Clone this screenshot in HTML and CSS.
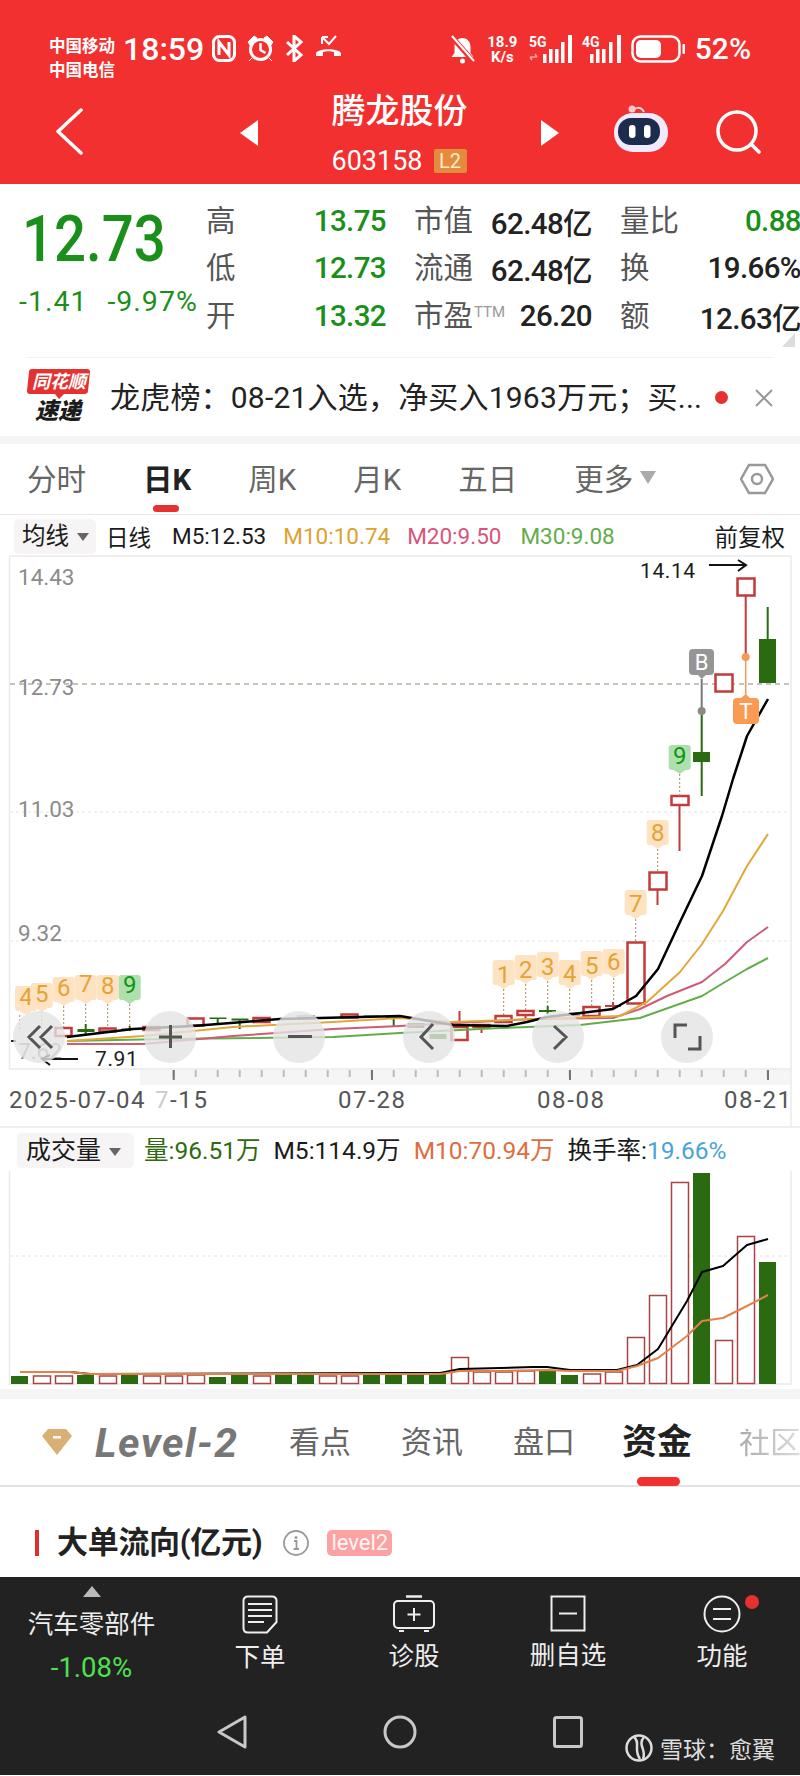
FILE: index.html
```html
<!DOCTYPE html>
<html lang="zh-CN">
<head>
    <meta charset="UTF-8">
    <meta name="viewport" content="width=device-width, initial-scale=1.0">
    <title>腾龙股份 603158</title>
    <link rel="stylesheet" href="styles.css">
</head>
<body>
<div class="phone">
    <header class="topbar">
        <div class="statusbar">
            <div class="carriers"><span>中国移动</span><span>中国电信</span></div>
            <span class="clock">18:59</span>
            <svg class="st-icon" width="24" height="27" viewBox="0 0 24 27"><rect x="1.5" y="1.5" width="21" height="24" rx="6" fill="none" stroke="#fff" stroke-width="3"/><path d="M7 20V7l10 13V7" fill="none" stroke="#fff" stroke-width="3"/></svg>
            <svg class="st-icon" width="27" height="27" viewBox="0 0 27 27"><circle cx="13.5" cy="14.5" r="10" fill="none" stroke="#fff" stroke-width="3"/><path d="M13.5 8v7l5 3" fill="none" stroke="#fff" stroke-width="2.5"/><path d="M1 7l6-6 3 2-7 7zM26 7l-6-6-3 2 7 7zM5 23l-3 3M22 23l3 3" fill="#fff" stroke="#fff"/></svg>
            <svg class="st-icon" width="19" height="27" viewBox="0 0 19 27"><path d="M2 7l14 13-7 6V1l7 6L2 20" fill="none" stroke="#fff" stroke-width="3"/></svg>
            <svg class="st-icon" width="27" height="23" viewBox="0 0 27 23"><path d="M1 21v-3c3-5 22-5 25 0v3h-7v-4c-3-1-8-1-11 0v4z" fill="#fff"/><path d="M7 9V2M7 2h6M7 2l7 7 7-8" fill="none" stroke="#fff" stroke-width="2"/></svg>
            <div class="status-right">
                <svg class="st-icon" width="27" height="29" viewBox="0 0 27 29"><path d="M13.500 3c-5 0-8 4-8 9v6l-3 4h22l-3-4v-6c0-5-3-9-8-9z" fill="#fff"/><circle cx="13.500" cy="26" r="2.500" fill="#fff"/><path d="M3 2l21 24" stroke="#f23030" stroke-width="5"/><path d="M3 1l22 25" stroke="#fff" stroke-width="2"/></svg>
                <div class="speed"><span>18.9</span><span>K/s</span></div>
                <svg class="st-icon signal" width="44" height="28" viewBox="0 0 44 28"><text x="0" y="12" class="sig-label">5G</text><path d="M1 22h7M8 22l-2-3M1 22l2 3" stroke="#f7a5a5" stroke-width="1.500" fill="none"/><rect x="14" y="19" width="3.500" height="9" fill="#fff"/><rect x="20" y="14" width="3.500" height="14" fill="#fff"/><rect x="26" y="14" width="3.500" height="14" fill="#fff"/><rect x="32" y="7" width="3.500" height="21" fill="#fff"/><rect x="39" y="0" width="4" height="28" fill="#fff"/></svg>
                <svg class="st-icon signal" width="40" height="28" viewBox="0 0 40 28"><text x="0" y="12" class="sig-label">4G</text><rect x="8" y="19" width="3.500" height="9" fill="#fff"/><rect x="14" y="14" width="3.500" height="14" fill="#fff"/><rect x="20" y="14" width="3.500" height="14" fill="#fff"/><rect x="27" y="7" width="3.500" height="21" fill="#fff"/><rect x="35" y="0" width="4" height="28" fill="#fff"/></svg>
                <svg class="st-icon" width="55" height="28" viewBox="0 0 55 28"><rect x="1.500" y="1.500" width="47" height="25" rx="8" fill="none" stroke="#fff" stroke-width="2.500"/><rect x="5" y="5" width="25" height="18" rx="5" fill="#fff"/><rect x="51.500" y="9" width="2.500" height="10" rx="1" fill="#fff"/></svg>
                <span class="battery">52%</span>
            </div>
        </div>
        <div class="navbar">
            <svg class="back" width="28" height="47" viewBox="0 0 28 47"><path d="M26 2L3 23.500 26 45" fill="none" stroke="#fff" stroke-width="3.500" stroke-linecap="round" stroke-linejoin="round"/></svg>
            <div class="nav-center">
                <svg width="18" height="26" viewBox="0 0 18 26"><path d="M18 0v26L0 13z" fill="#fff"/></svg>
                <div class="stock-name">
                    <div class="name">腾龙股份</div>
                    <div class="code">603158<span class="l2">L2</span></div>
                </div>
                <svg width="18" height="26" viewBox="0 0 18 26"><path d="M0 0v26l18-13z" fill="#fff"/></svg>
            </div>
            <svg class="robot" width="56" height="50" viewBox="0 0 56 50"><path d="M20 9c1-5 8-6 11 0" fill="none" stroke="#f7d9e0" stroke-width="2"/><circle cx="19" cy="6" r="3.500" fill="#f9c8c8"/><rect x="1" y="10" width="54" height="39" rx="19" fill="#efeafc"/><rect x="5" y="15" width="42" height="27" rx="13" fill="#1d2b4f"/><rect x="16" y="22" width="6.500" height="13" rx="3" fill="#fff"/><rect x="31" y="22" width="6.500" height="13" rx="3" fill="#fff"/></svg>
            <svg class="search" width="46" height="44" viewBox="0 0 46 44"><circle cx="22" cy="21" r="19" fill="none" stroke="#fff" stroke-width="3.500"/><path d="M36 34l8 8" stroke="#fff" stroke-width="3.500" stroke-linecap="round"/></svg>
        </div>
    </header>

    <section class="quote">
        <div class="price-box">
            <div class="price">12.73</div>
            <div class="change"><span>-1.41</span><span>-9.97%</span></div>
        </div>
        <div class="stats">
            <div class="stat"><span class="lbl">高</span><span class="val green">13.75</span></div>
            <div class="stat"><span class="lbl">市值</span><span class="val">62.48亿</span></div>
            <div class="stat"><span class="lbl">量比</span><span class="val green">0.88</span></div>
            <div class="stat"><span class="lbl">低</span><span class="val green">12.73</span></div>
            <div class="stat"><span class="lbl">流通</span><span class="val">62.48亿</span></div>
            <div class="stat"><span class="lbl">换</span><span class="val">19.66%</span></div>
            <div class="stat"><span class="lbl">开</span><span class="val green">13.32</span></div>
            <div class="stat"><span class="lbl">市盈<sup class="ttm">TTM</sup></span><span class="val">26.20</span></div>
            <div class="stat"><span class="lbl">额</span><span class="val">12.63亿</span></div>
        </div>
        <div class="corner"></div>
    </section>

    <section class="news">
        <svg class="news-logo" width="64" height="54" viewBox="0 0 64 54">
            <path d="M5 0H60Q63 0 63 3L61 22Q61 25 57 25H37L32 30 28 25H3Q0 25 0 22L2 3Q2 0 5 0Z" fill="#e5312f"/>
            <text x="32" y="19" class="logo-top">同花顺</text>
            <text x="31" y="50" class="logo-bottom">速递</text>
        </svg>
        <div class="news-text">龙虎榜：08-21入选，净买入1963万元；买...</div>
        <span class="news-dot"></span>
        <svg class="news-close" width="18" height="18" viewBox="0 0 18 18"><path d="M1 1l16 16M17 1L1 17" stroke="#999" stroke-width="2"/></svg>
    </section>
    <div class="band"></div>

    <nav class="periods">
        <span class="period">分时</span>
        <span class="period active">日K</span>
        <span class="period">周K</span>
        <span class="period">月K</span>
        <span class="period">五日</span>
        <span class="period more">更多<i class="caret"></i></span>
        <svg class="hex" width="34" height="32" viewBox="0 0 34 32"><path d="M9 2h16l8 14-8 14H9L1 16z" fill="none" stroke="#999" stroke-width="2.500"/><circle cx="17" cy="16" r="5" fill="none" stroke="#999" stroke-width="2.500"/></svg>
    </nav>

    <div class="legend">
        <span class="picker">均线<i class="caret small"></i></span>
        <span>日线</span>
        <span class="m5">M5:12.53</span>
        <span class="m10">M10:10.74</span>
        <span class="m20">M20:9.50</span>
        <span class="m30">M30:9.08</span>
        <span class="adjust">前复权</span>
    </div>

    <svg class="chart" width="800" height="575" viewBox="0 555 800 575">
        <defs>
            <path id="tag" d="M0 0L-6-4H-8Q-11-4-11-7V-26Q-11-29-8-29H8Q11-29 11-26V-7Q11-4 8-4H6Z"/>
        </defs>
        <rect x="140" y="1070" width="650" height="16" fill="#f5f5f5"/>
        <path class="frame" d="M9.500 557H791M9.500 557V1070H791M791 557V1128"/>
        <line class="grid" x1="10" y1="813" x2="790" y2="813"/>
        <line class="grid" x1="10" y1="942" x2="790" y2="942"/>
        <line class="price-line" x1="10" y1="685" x2="790" y2="685"/>

        <text x="18" y="586" class="axis">14.43</text>
        <text x="18" y="696" class="axis">12.73</text>
        <text x="18" y="818" class="axis">11.03</text>
        <text x="18" y="942" class="axis">9.32</text>
        <text x="18" y="1060" class="axis">7.62</text>

        <!-- hollow red candles -->
        <g class="up">
            <rect x="55.500" y="1029" width="16" height="8"/>
            <rect x="99.500" y="1029.500" width="16" height="3"/>
            <rect x="143.500" y="1028" width="16" height="3"/>
            <rect x="187.500" y="1019.500" width="16" height="7"/>
            <rect x="253.500" y="1019" width="16" height="4"/>
            <rect x="341.500" y="1015.500" width="16" height="3"/>
            <rect x="451.500" y="1028" width="16" height="13"/>
            <rect x="473.500" y="1026" width="16" height="2"/>
            <rect x="495.500" y="1017" width="16" height="6"/>
            <rect x="517.500" y="1012" width="16" height="4"/>
            <rect x="583.500" y="1008" width="16" height="9"/>
            <rect x="627.500" y="943.500" width="17" height="61"/>
            <rect x="649.500" y="873.500" width="17" height="17"/>
            <rect x="671.500" y="797" width="17" height="9"/>
            <rect x="715.500" y="675.500" width="17" height="17"/>
            <rect x="737.500" y="579.500" width="17" height="17"/>
        </g>
        <g class="up-wick">
            <path d="M459.500 1012V1028M481.500 1028V1034M525.500 1016V1019M613 1003V1010M605 1007H621M657.500 891V906M679.500 806V852M745.700 597V658"/>
        </g>
        <!-- solid green candles -->
        <g class="down">
            <rect x="77.500" y="1030" width="17" height="3"/>
            <rect x="121.500" y="1029.500" width="17" height="1.500"/>
            <rect x="209.500" y="1018.500" width="17" height="1.500"/>
            <rect x="231.500" y="1019.500" width="17" height="2"/>
            <rect x="363.500" y="1016.500" width="16" height="1.500"/>
            <rect x="385.500" y="1018" width="16" height="1.500"/>
            <rect x="407.500" y="1024" width="17" height="5"/>
            <rect x="429.500" y="1035" width="17" height="5"/>
            <rect x="539" y="1011" width="17" height="2"/>
            <rect x="693" y="753" width="17" height="10"/>
            <rect x="759" y="640" width="17" height="44"/>
        </g>
        <path class="down-wick" d="M85.700 1025V1035M129.700 1027V1032M217.700 1019V1024M239.700 1020V1030M393.700 1016V1028M547.700 1007V1015M701.700 712V797M767.700 608V640"/>
        <path class="grey-wick" d="M701.700 680V712"/>
        <rect x="297" y="1016" width="18" height="5" fill="#a9a9a9"/>
        <rect x="569" y="1013" width="11" height="4" fill="#b9b9b9"/>

        <!-- moving averages -->
        <polyline class="ma ma30" points="67,1042 167,1040 333,1038 400,1034 500,1029 580,1026 640,1019 702,997 725,983 747,970 768,959"/>
        <polyline class="ma ma20" points="67,1045 143,1045 233,1037 333,1030 400,1027 533,1020 613,1019 640,1010 667,997 702,983 725,965 747,943 768,928"/>
        <polyline class="ma ma10" points="67,1042 143,1037 233,1028 333,1023 400,1019 450,1023 620,1017 647,1003 680,973 702,945 723,912 747,867 768,835"/>
        <polyline class="ma ma5" points="67,1038 133,1030 193,1027 280,1020 400,1017 453,1026 507,1027 527,1023 547,1018 573,1015 613,1010 636,997 658,970 680,923 702,877 722,817 733,780 747,737 768,700"/>
        <line x1="11" y1="1042" x2="16" y2="1042" stroke="#222" stroke-width="2"/>

        <!-- count markers -->
        <path class="dots" d="M19.700 1016V1030M41.700 1012V1030M63.700 1007V1028M85.700 1005V1025M107.700 1005V1029M129.700 1005V1027M503.700 990V1017M525.700 985V1011M547.700 982V1007M569.700 990V1013M591.700 981V1007M613.700 979V1003M635.700 920V943M657.700 850V873M679.700 775V797"/>
        <g class="tag-o">
            <use href="#tag" x="26" y="1016"/><text x="26" y="1006">4</text>
            <use href="#tag" x="41.700" y="1013"/><text x="41.700" y="1003">5</text>
            <use href="#tag" x="63.700" y="1007"/><text x="63.700" y="997">6</text>
            <use href="#tag" x="85.700" y="1005"/><text x="85.700" y="993">7</text>
            <use href="#tag" x="107.700" y="1005"/><text x="107.700" y="995">8</text>
            <use href="#tag" x="503.700" y="990"/><text x="503.700" y="984">1</text>
            <use href="#tag" x="525.700" y="985"/><text x="525.700" y="979">2</text>
            <use href="#tag" x="547.700" y="982"/><text x="547.700" y="976">3</text>
            <use href="#tag" x="569.700" y="990"/><text x="569.700" y="983">4</text>
            <use href="#tag" x="591.700" y="981"/><text x="591.700" y="975">5</text>
            <use href="#tag" x="613.700" y="979"/><text x="613.700" y="971">6</text>
            <use href="#tag" x="635.700" y="920"/><text x="635.700" y="913">7</text>
            <use href="#tag" x="657.700" y="850"/><text x="657.700" y="842">8</text>
        </g>
        <g class="tag-g">
            <use href="#tag" x="129.700" y="1005"/><text x="129.700" y="994">9</text>
            <use href="#tag" x="679.700" y="775"/><text x="679.700" y="765">9</text>
        </g>

        <!-- buy and sell marks -->
        <circle cx="701.700" cy="712" r="4" fill="#8a8a80"/>
        <path d="M693 650H710Q714 650 714 654V672Q714 676 710 676H706L701.700 680 698 676H693Q689 676 689 672V654Q689 650 693 650Z" fill="#959595"/>
        <text x="701.700" y="671" class="mark">B</text>
        <line x1="745.700" y1="658" x2="745.700" y2="696" stroke="#f59a50" stroke-width="1.500"/>
        <circle cx="745.700" cy="658" r="4" fill="#f59a50"/>
        <path d="M737 699H741L745.700 695 750 699H755Q759 699 759 703V721Q759 725 755 725H737Q733 725 733 721V703Q733 699 737 699Z" fill="#fb9a52"/>
        <text x="745.700" y="720" class="mark">T</text>

        <text x="640" y="579" class="extreme">14.14</text>
        <path class="arrow" d="M709 566H745M738 561L746 566 738 572"/>
        <text x="95" y="1067" class="extreme">7.91</text>
        <path class="arrow" d="M78 1060H42M50 1056L42 1060 50 1066"/>

        <!-- zoom and pan buttons over the chart -->
        <circle class="ctrl" cx="39" cy="1038" r="26"/>
        <circle class="ctrl" cx="170" cy="1038" r="26"/>
        <circle class="ctrl" cx="299" cy="1038" r="26"/>
        <circle class="ctrl" cx="429" cy="1038" r="26"/>
        <circle class="ctrl" cx="558" cy="1038" r="26"/>
        <circle class="ctrl" cx="687" cy="1038" r="26"/>
        <path class="ctrl-icon" d="M40 1027L29 1038 40 1049M52 1027L41 1038 52 1049M159 1038H182M170.500 1026V1049M288 1037.500H312M433 1025L421 1038 433 1050M554 1027L566 1038 554 1050M675 1039V1026H687M700 1037V1050H688"/>

        <!-- time axis -->
        <line class="ticks" x1="172.700" y1="1074.500" x2="770" y2="1074.500"/>
        <path class="major" d="M173.700 1071V1081M372 1071V1081M570 1071V1081M768 1071V1081"/>
        <text x="9" y="1109" class="date">2025-07-04</text>
        <text x="155" y="1109" class="date"><tspan class="faded">7</tspan>-15</text>
        <text x="338" y="1109" class="date">07-28</text>
        <text x="537" y="1109" class="date">08-08</text>
        <text x="724" y="1109" class="date">08-21</text>
        <line x1="0" y1="1128" x2="800" y2="1128" stroke="#eee" stroke-width="2"/>
    </svg>

    <div class="vol-legend">
        <span class="picker">成交量<i class="caret small"></i></span>
        <span class="vol-now">量:96.51万</span>
        <span>M5:114.9万</span>
        <span class="vol-m10">M10:70.94万</span>
        <span>换手率:<b class="turnover">19.66%</b></span>
    </div>

    <svg class="volume" width="800" height="218" viewBox="0 1172 800 218">
        <path class="frame" d="M9.500 1172V1385H791V1172"/>
        <line class="grid" x1="10" y1="1257" x2="790" y2="1257"/>
        <g class="down">
            <rect x="11" y="1377" width="17" height="8"/>
            <rect x="77" y="1376" width="17" height="9"/>
            <rect x="121" y="1376" width="17" height="9"/>
            <rect x="209" y="1378" width="17" height="7"/>
            <rect x="231" y="1376" width="17" height="9"/>
            <rect x="275" y="1376" width="17" height="9"/>
            <rect x="297" y="1376" width="17" height="9"/>
            <rect x="363" y="1376" width="17" height="9"/>
            <rect x="385" y="1376" width="17" height="9"/>
            <rect x="407" y="1376" width="17" height="9"/>
            <rect x="429" y="1375" width="17" height="10"/>
            <rect x="539" y="1372" width="17" height="13"/>
            <rect x="561" y="1376" width="17" height="9"/>
            <rect x="693" y="1174" width="17" height="211"/>
            <rect x="759" y="1263" width="17" height="122"/>
        </g>
        <g class="vol-up">
            <rect x="33.500" y="1377" width="17" height="7.500"/>
            <rect x="55.500" y="1377" width="17" height="7.500"/>
            <rect x="99.500" y="1377" width="17" height="7.500"/>
            <rect x="143.500" y="1377" width="17" height="7.500"/>
            <rect x="165.500" y="1377" width="17" height="7.500"/>
            <rect x="187.500" y="1376" width="17" height="8.500"/>
            <rect x="253.500" y="1377" width="17" height="7.500"/>
            <rect x="319.500" y="1377" width="17" height="7.500"/>
            <rect x="341.500" y="1377" width="17" height="7.500"/>
            <rect x="451.500" y="1358.500" width="17" height="26"/>
            <rect x="473.500" y="1373" width="17" height="11.500"/>
            <rect x="495.500" y="1373" width="17" height="11.500"/>
            <rect x="517.500" y="1372" width="17" height="12.500"/>
            <rect x="583.500" y="1375" width="17" height="9.500"/>
            <rect x="605.500" y="1373" width="17" height="11.500"/>
            <rect x="627.500" y="1338.500" width="17" height="46"/>
            <rect x="649.500" y="1296.500" width="17" height="88"/>
            <rect x="671.500" y="1183.500" width="17" height="201"/>
            <rect x="715.500" y="1341.500" width="17" height="43"/>
            <rect x="737.500" y="1237.500" width="17" height="147"/>
        </g>
        <polyline class="ma ma5 thin" points="20,1373 70,1373 90,1375 400,1374 440,1374 460,1370 500,1369 533,1368 547,1368 570,1371 617,1371 637,1366 658,1350 687,1302 702,1273 723,1267 747,1246 768,1240"/>
        <polyline class="ma vol-m10-line" points="20,1373 70,1373 90,1375 400,1375 440,1375 460,1372 500,1372 547,1371 570,1372 617,1372 637,1367 658,1359 687,1337 702,1322 723,1319 747,1307 768,1296"/>
    </svg>
    <div class="band tall"></div>

    <nav class="detail-tabs">
        <svg class="gem" width="30" height="26" viewBox="0 0 30 26"><path d="M6 0H24L30 7 15 26 0 7Z" fill="#d9b074"/><rect x="11" y="7" width="8" height="2.500" fill="#fff"/></svg>
        <span class="level">Level-2</span>
        <span class="dtab">看点</span>
        <span class="dtab">资讯</span>
        <span class="dtab">盘口</span>
        <span class="dtab active">资金</span>
        <span class="dtab dim">社区</span>
    </nav>

    <section class="flow-head">
        <span class="flow-bar"></span>
        <h2>大单流向(亿元)</h2>
        <svg class="info" width="26" height="26" viewBox="0 0 26 26"><circle cx="13" cy="13" r="12" fill="none" stroke="#999" stroke-width="1.800"/><circle cx="13" cy="7.500" r="1.500" fill="#999"/><path d="M11 11h2.500v8M10.500 19h5.500" fill="none" stroke="#999" stroke-width="1.800"/></svg>
        <span class="level-badge">level2</span>
    </section>

    <footer class="dock">
        <div class="dock-row">
            <div class="sector">
                <i class="sector-up"></i>
                <span class="sector-name">汽车零部件</span>
                <span class="sector-pct">-1.08%</span>
            </div>
            <div class="action">
                <svg width="36" height="39" viewBox="0 0 36 39"><path d="M6 1.500H30Q34.500 1.500 34.500 6V27L25 37.500H6Q1.500 37.500 1.500 33V6Q1.500 1.500 6 1.500Z" fill="none" stroke="#eee" stroke-width="2"/><path d="M6 9H30M6 15H30M6 21H30M6 27H22" stroke="#eee" stroke-width="2"/></svg>
                <span>下单</span>
            </div>
            <div class="action">
                <svg width="44" height="38" viewBox="0 0 44 38"><path d="M14 1.500H30" stroke="#eee" stroke-width="2.500"/><rect x="2" y="6" width="40" height="27" rx="4" fill="none" stroke="#eee" stroke-width="2"/><path d="M22 13V26M15.500 19.500H28.500M7 36H12M32 36H37" stroke="#eee" stroke-width="2"/></svg>
                <span>诊股</span>
            </div>
            <div class="action">
                <svg width="36" height="37" viewBox="0 0 36 37"><rect x="1.500" y="1.500" width="33" height="34" fill="none" stroke="#eee" stroke-width="2"/><path d="M9 18.500H27" stroke="#eee" stroke-width="2"/></svg>
                <span>删自选</span>
            </div>
            <div class="action">
                <svg width="38" height="38" viewBox="0 0 38 38"><circle cx="19" cy="19" r="17.500" fill="none" stroke="#eee" stroke-width="2"/><path d="M10 14H28M10 24H28" stroke="#eee" stroke-width="2"/></svg>
                <span>功能</span>
                <i class="action-dot"></i>
            </div>
        </div>
        <div class="android-nav">
            <svg width="30" height="34" viewBox="0 0 30 34"><path d="M28 2V32L2 17Z" fill="none" stroke="#c8c8c8" stroke-width="3" stroke-linejoin="round"/></svg>
            <svg width="34" height="34" viewBox="0 0 34 34"><circle cx="17" cy="17" r="15" fill="none" stroke="#c8c8c8" stroke-width="3"/></svg>
            <svg width="30" height="32" viewBox="0 0 30 32"><rect x="1.500" y="1.500" width="27" height="29" rx="2" fill="none" stroke="#c8c8c8" stroke-width="3"/></svg>
        </div>
        <div class="watermark">
            <svg width="28" height="28" viewBox="0 0 28 28"><circle cx="14" cy="14" r="12.500" fill="none" stroke="#ddd" stroke-width="2.500"/><path d="M9 3C16 9 8 15 15 25M19 3C12 11 22 16 18 25" fill="none" stroke="#ddd" stroke-width="2.500"/></svg>
            <span>雪球：愈翼</span>
        </div>
    </footer>
</div>
</body>
</html>
```

FILE: styles.css
```css
* {
    margin: 0;
    padding: 0;
    box-sizing: border-box;
}

body {
    font-family: Roboto, "Noto Sans CJK SC", sans-serif;
    background: #fff;
    color: #222;
}

.phone {
    width: 800px;
    height: 1776px;
    overflow: hidden;
    position: relative;
}

svg {
    display: block;
}

/* red header */
.topbar {
    background: #f23030;
    height: 184px;
    color: #fff;
}

.statusbar {
    height: 86px;
    padding: 35px 49px 0;
    display: flex;
    align-items: flex-start;
}

.carriers {
    display: flex;
    flex-direction: column;
    font-size: 16.500px;
    font-weight: 700;
    line-height: 24px;
    width: 76px;
}

.clock {
    font-size: 32px;
    line-height: 28px;
    font-weight: 500;
    width: 89px;
    margin-left: -2px;
}

.st-icon {
    margin-right: 11px;
}

.status-right {
    margin-left: auto;
    display: flex;
    align-items: flex-start;
}

.status-right .st-icon {
    margin-right: 9px;
}

.speed {
    display: flex;
    flex-direction: column;
    align-items: center;
    font-size: 15px;
    font-weight: 700;
    line-height: 15px;
    width: 35px;
    margin-right: 9px;
}

.sig-label {
    font-size: 14px;
    font-weight: 700;
    fill: #fff;
}

.battery {
    font-size: 30px;
    font-weight: 500;
    line-height: 28px;
}

.navbar {
    height: 98px;
    display: flex;
    align-items: flex-start;
    position: relative;
}

.back {
    margin: 22px 0 0 55px;
}

.nav-center {
    margin: 34px 0 0 157px;
    width: 319px;
    display: flex;
    justify-content: space-between;
    align-items: flex-start;
}

.nav-center .stock-name {
    margin-top: -31px;
}

.stock-name {
    text-align: center;
}

.name {
    font-size: 34px;
    line-height: 44px;
    font-weight: 500;
}

.code {
    font-size: 27px;
    line-height: 34px;
    margin-top: 11px;
    display: flex;
    align-items: center;
    gap: 11px;
}

.l2 {
    background: #e48c3e;
    color: #ffe9c9;
    font-size: 20px;
    line-height: 24px;
    width: 33px;
    text-align: center;
    border-radius: 2px;
}

.robot {
    margin: 17px 0 0 54px;
}

.search {
    margin: 24px 0 0 46px;
}

/* quote block */
.quote {
    height: 173px;
    padding-top: 13px;
    display: flex;
    position: relative;
}

.price-box {
    width: 208px;
    padding-left: 19px;
    color: #1a8f1a;
}

.price {
    font-size: 64px;
    font-weight: 500;
    line-height: 70px;
    margin-top: 8px;
    margin-left: 3px;
    transform: scaleX(0.88);
    transform-origin: left;
}

.change {
    font-size: 28.500px;
    line-height: 30px;
    margin-top: 12px;
    display: flex;
    gap: 20px;
    letter-spacing: 1px;
    white-space: nowrap;
}

.stats {
    display: grid;
    grid-template-columns: 178px 176px 179px;
    grid-auto-rows: 47.500px;
    column-gap: 30px;
    height: 143px;
    width: 592px;
}

.stat {
    display: flex;
    justify-content: space-between;
    align-items: center;
}

.lbl {
    font-size: 29.500px;
    color: #555;
    position: relative;
    top: -3px;
    left: -2px;
}

.ttm {
    font-size: 15px;
    color: #999;
    margin-left: 1px;
    vertical-align: 9px;
    line-height: 0;
}

.val {
    font-size: 29.500px;
    font-weight: 500;
    color: #222;
    letter-spacing: -0.6px;
    white-space: nowrap;
}

.val.green {
    color: #1a8f1a;
}

.corner {
    position: absolute;
    right: 5px;
    bottom: 10px;
    width: 0;
    height: 0;
    border-left: 13px solid transparent;
    border-bottom: 14px solid #ddd;
}

/* news strip */
.news {
    height: 79px;
    margin: 0 26px;
    border-top: 1px solid #f2f2f2;
    padding-top: 11px;
    display: flex;
    align-items: flex-start;
    position: relative;
}

.news-logo {
    margin-left: 1px;
    overflow: visible;
}

.logo-top {
    font-size: 18px;
    font-weight: 700;
    font-style: italic;
    fill: #fff;
    text-anchor: middle;
}

.logo-bottom {
    font-size: 23px;
    font-weight: 900;
    font-style: italic;
    fill: #1c1c1c;
    text-anchor: middle;
}

.news-text {
    font-size: 30px;
    line-height: 40px;
    margin: 9px 0 0 19px;
    width: 600px;
    white-space: nowrap;
    color: #222;
    letter-spacing: 0.2px;
}

.news-dot {
    width: 13px;
    height: 13px;
    border-radius: 50%;
    background: #e5312f;
    margin: 22px 0 0 5px;
    flex: none;
}

.news-close {
    margin: 20px 0 0 27px;
    flex: none;
}

.band {
    height: 8px;
    background: #f5f5f5;
}

.band.tall {
    height: 10px;
}

/* period tabs */
.periods {
    height: 71px;
    border-bottom: 1px solid #e8e8e8;
    padding: 0 0 4px 27px;
    display: flex;
    align-items: center;
    gap: 57px;
    position: relative;
}

.period {
    font-size: 29.500px;
    color: #666;
    white-space: nowrap;
    position: relative;
    display: flex;
    align-items: center;
}

.period.active {
    color: #222;
    font-weight: 700;
}

.period.active::after {
    content: "";
    position: absolute;
    left: 10px;
    bottom: -14px;
    width: 26px;
    height: 7px;
    border-radius: 4px;
    background: #e5312f;
}

.caret {
    display: inline-block;
    width: 0;
    height: 0;
    margin-left: 7px;
    border-left: 8px solid transparent;
    border-right: 8px solid transparent;
    border-top: 13px solid #aaa;
}

.caret.small {
    border-left-width: 6px;
    border-right-width: 6px;
    border-top: 8px solid #666;
    margin-left: 8px;
    vertical-align: middle;
}

.hex {
    position: absolute;
    left: 740px;
    top: 19px;
}

/* indicator legends */
.legend {
    height: 39px;
    padding: 3px 15px 0 14px;
    display: flex;
    align-items: center;
    font-size: 22.500px;
    color: #1b1b1b;
    white-space: nowrap;
}

.picker {
    background: #f6f4f4;
    border-radius: 5px;
    height: 35px;
    line-height: 35px;
    padding: 0 8px;
    flex: none;
}

.legend .picker {
    width: 82px;
    margin-right: 10px;
    font-size: 23.500px;
}

.m5 {
    margin-left: 21px;
}

.m10 {
    margin-left: 17px;
    color: #dca22e;
}

.m20 {
    margin-left: 17px;
    color: #d6567a;
}

.m30 {
    margin-left: 19px;
    color: #62ad4a;
}

.adjust {
    margin-left: auto;
    font-size: 23.500px;
}

.vol-legend {
    height: 42px;
    padding: 4px 0 0 17px;
    display: flex;
    align-items: flex-start;
    gap: 13px;
    font-size: 24.500px;
    line-height: 36px;
    color: #1b1b1b;
    white-space: nowrap;
}

.vol-legend .picker {
    width: 117px;
    padding: 0 9px;
    font-size: 25px;
    margin-right: -3px;
}

.vol-now {
    color: #2d6a10;
}

.vol-m10 {
    color: #dd6e40;
}

.turnover {
    font-weight: 400;
    color: #4aa3d8;
}

/* svg charts */
.frame {
    fill: none;
    stroke: #eaeaea;
    stroke-width: 1.500;
}

.grid {
    stroke: #e4e4e4;
    stroke-dasharray: 3 3;
    stroke-width: 1;
}

.price-line {
    stroke: #8f8a70;
    stroke-dasharray: 5 4;
    stroke-width: 1;
}

.axis {
    font-size: 22.500px;
    fill: #8c8c8c;
}

.up rect {
    fill: #fff;
    stroke: #c33a3a;
    stroke-width: 2.500;
}

.vol-up rect {
    fill: #fff;
    stroke: #a84444;
    stroke-width: 1.500;
}

.up-wick path {
    fill: none;
    stroke: #c33a3a;
    stroke-width: 2;
}

.down rect {
    fill: #2a6a10;
}

.down-wick {
    fill: none;
    stroke: #2a6a10;
    stroke-width: 2;
}

.grey-wick {
    stroke: #777;
    stroke-width: 2;
}

.ma {
    fill: none;
    stroke-width: 2;
    stroke-linejoin: round;
}

.ma5 {
    stroke: #000;
    stroke-width: 2.500;
}

.ma5.thin {
    stroke-width: 2;
}

.ma10 {
    stroke: #dfa93a;
}

.ma20 {
    stroke: #cd5c78;
}

.ma30 {
    stroke: #62ad4a;
}

.vol-m10-line {
    stroke: #e2824a;
}

.dots {
    fill: none;
    stroke: #a58a62;
    stroke-width: 1;
    stroke-dasharray: 2 2;
}

.tag-o use {
    fill: #fde3c2;
}

.tag-g use {
    fill: #aee0ae;
}

.tag-o text,
.tag-g text {
    font-size: 24px;
    text-anchor: middle;
}

.tag-o text {
    fill: #e7a234;
}

.tag-g text {
    fill: #0e960e;
}

.mark {
    font-size: 22px;
    fill: #fff;
    text-anchor: middle;
}

.extreme {
    font-size: 21px;
    letter-spacing: 0.6px;
    fill: #1b1b1b;
}

.arrow {
    fill: none;
    stroke: #111;
    stroke-width: 2;
}

.ctrl {
    fill: rgba(228, 228, 228, 0.8);
}

.ctrl-icon {
    fill: none;
    stroke: #555;
    stroke-width: 3;
}

.ticks {
    stroke: #bbb;
    stroke-width: 7;
    stroke-dasharray: 2 20;
}

.major {
    fill: none;
    stroke: #777;
    stroke-width: 2;
}

.date {
    font-size: 24px;
    letter-spacing: 1.600px;
    fill: #555;
}

.faded {
    fill: #ccc;
}

/* detail tabs */
.detail-tabs {
    height: 88px;
    border-bottom: 2px solid #e3e3e3;
    padding: 30px 0 0 42px;
    display: flex;
    align-items: flex-start;
    position: relative;
    white-space: nowrap;
}

.detail-tabs > * {
    flex: none;
}

.level {
    font-size: 41px;
    line-height: 28px;
    font-weight: 700;
    font-style: italic;
    color: #777;
    margin: 0 51px 0 23px;
    width: 143px;
    letter-spacing: 1.500px;
}

.dtab {
    font-size: 31px;
    line-height: 28px;
    color: #666;
    margin-right: 50px;
}

.dtab.active {
    font-size: 35px;
    font-weight: 700;
    color: #222;
    margin-left: -3px;
    margin-right: 47px;
    position: relative;
}

.dtab.active::after {
    content: "";
    position: absolute;
    left: 15px;
    top: 48px;
    width: 43px;
    height: 9px;
    border-radius: 5px;
    background: #f23030;
}

.dtab.dim {
    background: linear-gradient(90deg, #aaa, #ddd);
    -webkit-background-clip: text;
    background-clip: text;
    color: transparent;
}

.flow-head {
    height: 90px;
    padding: 43px 0 0 35px;
    display: flex;
    align-items: flex-start;
}

.flow-bar {
    width: 4px;
    height: 26px;
    background: #d9312f;
}

.flow-head h2 {
    font-size: 31px;
    line-height: 26px;
    font-weight: 700;
    color: #222;
    margin-left: 18px;
    letter-spacing: -0.3px;
}

.info {
    margin-left: 21px;
}

.level-badge {
    margin-left: 18px;
    width: 65px;
    height: 26px;
    line-height: 26px;
    border-radius: 5px;
    background: #fba3a3;
    color: #fff4f4;
    font-size: 22px;
    text-align: center;
}

/* bottom dock */
.dock {
    background: #222;
    height: 198px;
    position: relative;
    color: #eee;
}

.dock-row {
    display: grid;
    grid-template-columns: 184px repeat(4, 154px);
    height: 126px;
    margin-left: -1px;
}

.sector {
    display: flex;
    flex-direction: column;
    align-items: center;
    padding-left: 1px;
}

.sector-up {
    margin-top: 9px;
    width: 0;
    height: 0;
    border-left: 9px solid transparent;
    border-right: 9px solid transparent;
    border-bottom: 11px solid #bbb;
}

.sector-name {
    font-size: 25.500px;
    line-height: 36px;
    margin-top: 9px;
}

.sector-pct {
    font-size: 27.500px;
    line-height: 32px;
    margin-top: 10px;
    color: #4fe04f;
}

.action {
    display: flex;
    flex-direction: column;
    align-items: center;
    padding-top: 18px;
    font-size: 25.500px;
    line-height: 34px;
    position: relative;
}

.action span {
    margin-top: 6px;
}

.action-dot {
    position: absolute;
    left: 100px;
    top: 18px;
    width: 14px;
    height: 14px;
    border-radius: 50%;
    background: #e5312f;
}

.android-nav {
    display: flex;
    justify-content: center;
    align-items: center;
    gap: 136px;
    margin-top: 12px;
    height: 34px;
}

.watermark {
    position: absolute;
    left: 625px;
    top: 154px;
    display: flex;
    align-items: center;
    gap: 7px;
    font-size: 23px;
    color: #ddd;
    white-space: nowrap;
}
```
